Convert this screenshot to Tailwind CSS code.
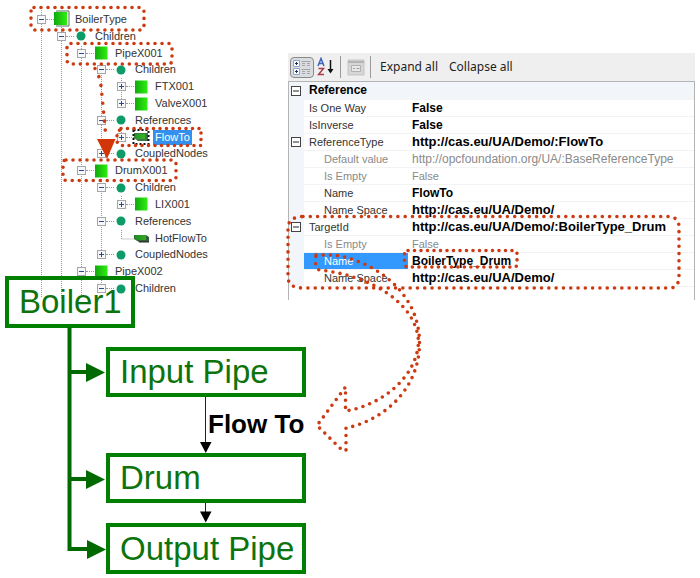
<!DOCTYPE html>
<html lang="en">
<head>
<meta charset="utf-8">
<title>Boiler type model</title>
<script src="https://cdn.jsdelivr.net/npm/@tailwindcss/browser@4"></script>
</head>
<body class="bg-white">
<main class="relative min-h-screen overflow-hidden font-['Liberation_Sans',Arial,sans-serif]">
  <div class="flex items-start pr-[5px]">
    <section class="relative w-[288px] shrink-0 pt-[11px]" aria-label="Type tree">
      <svg class="absolute left-0 top-0" width="240" height="300" fill="none" stroke="#999" stroke-dasharray="1 1" aria-hidden="true">
        <path d="M41.500 10V298M61.500 27V298M81.500 46V298M101.500 63V155M121.500 78V104M121.500 128V137M101.500 179V256M121.500 196V205M121.500 230V239H134M101.500 280V289"/>
      </svg>
      <ul id="tree" class="relative grid h-[286px] auto-rows-fr text-[11px] text-[#333]"></ul>
    </section>

    <section class="mt-[53px] min-w-0 flex-1" aria-label="Properties">
      <div class="flex h-7 items-center bg-[#efefef] pl-[2px] font-['Noto_Sans','Open_Sans',sans-serif] text-[12px] text-[#1e1e1e]">
        <button class="flex h-[21px] w-6 items-center justify-center rounded-sm border border-[#8a8a8a] bg-[#d9dde1]" aria-label="Categorized">
          <svg width="20" height="17" viewBox="0 0 20 17" fill="none">
            <path d="M1.500 1.500h6v6h-6zM1.500 9.500h6v6h-6z" fill="#fff" stroke="#8fa6c6"/>
            <path d="M3 4.500h3M4.500 3v3M3 12.500h3M4.500 11v3" stroke="#16315f"/>
            <path d="M9.500 2.500h9M10 4.500h3M15 4.500h3M10 6.500h3M15 6.500h3M9.500 10.500h9M10 12.500h3M15 12.500h3M10 14.500h3M15 14.500h3" stroke="#a6a6a6"/>
          </svg>
        </button>
        <button class="ml-[3px] h-5 w-[18px]" aria-label="Alphabetical">
          <svg width="18" height="20" viewBox="0 0 18 20" fill="none">
            <path d="M1 9L4 1.500L7 9M2 6.500h4" stroke="#3b66b8" stroke-width="1.500"/>
            <path d="M1.500 11.500h5L1.500 17.500h5.500" stroke="#a83c4c" stroke-width="1.500"/>
            <path d="M13.500 3v12" stroke="#111" stroke-width="1.500"/>
            <path d="M10.500 12l3 4.500l3-4.500z" fill="#111"/>
          </svg>
        </button>
        <span class="ml-[5px] h-[22px] w-px bg-[#9a9a9a]"></span>
        <button class="ml-[6px] h-[17px] w-[18px]" aria-label="Property pages" disabled>
          <svg width="18" height="17" viewBox="0 0 18 17" fill="none">
            <path d="M1 1h16v15H1z" fill="#d6d6d6" stroke="#c4c4c4"/>
            <path d="M1 3h16" stroke="#b4b4b4" stroke-width="2"/>
            <path d="M4.500 6.500h9v6h-9z" fill="#e8e8e8" stroke="#b0b0b0"/>
            <path d="M6 9.500h2M9.500 9.500h3" stroke="#a0a0a0"/>
          </svg>
        </button>
        <span class="ml-[5px] h-[22px] w-px bg-[#9a9a9a]"></span>
        <button class="ml-[9px] whitespace-nowrap">Expand all</button>
        <button class="ml-[11px] whitespace-nowrap">Collapse all</button>
      </div>
      <div class="h-[219px] border-x border-t border-[#b4b4b4]">
        <table class="w-full table-fixed border-collapse text-[11px]">
          <colgroup><col class="w-[15px]"><col class="w-[104px]"><col></colgroup>
          <tbody id="props"></tbody>
        </table>
      </div>
    </section>
  </div>

  <section aria-label="Boiler instance" class="text-[33px] text-[#0d740d]">
    <div class="absolute left-[5px] top-[276px] flex h-[52px] w-[130px] items-center whitespace-nowrap border-4 border-[#008000] pl-[10px]">Boiler1</div>
    <div class="absolute left-[106px] top-[347px] flex h-[50px] w-[200px] items-center whitespace-nowrap border-4 border-[#008000] pl-[10px]">Input Pipe</div>
    <div class="absolute left-[106px] top-[453px] flex h-[50px] w-[200px] items-center whitespace-nowrap border-4 border-[#008000] pl-[10px]">Drum</div>
    <div class="absolute left-[106px] top-[523px] flex h-[51px] w-[200px] items-center whitespace-nowrap border-4 border-[#008000] pl-[10px]">Output Pipe</div>
    <div class="absolute left-[208px] top-[410px] whitespace-nowrap text-[26px] leading-[28px] font-bold text-black">Flow To</div>
  </section>

  <svg class="pointer-events-none absolute left-0 top-0" width="700" height="578" viewBox="0 0 700 578" fill="none" aria-hidden="true">
    <path d="M69.500 327V549H90M69.500 372H90M69.500 479H90" stroke="#006a00" stroke-width="4"/>
    <path d="M86 363l19 9.500l-19 9.500zM86 470l19 9.500l-19 9.500zM87 540l19 9.500l-19 9.500z" fill="#006a00"/>
    <path d="M205.500 397V444M205.500 503V513" stroke="#222"/>
    <path d="M200 442h11.500l-5.750 11zM200 511.500h11.500l-5.750 11z" fill="#000"/>
    <g stroke="#cb3a10" stroke-width="3.600" stroke-linecap="round">
      <path d="M34 7.500H140Q144 8 144 12V26Q144 30 140 30H34Q31 29 31 25V12Q31 8 34 7.500Z" stroke-dasharray="0 7"/>
      <path d="M71 43.500H169Q172 44 172 47V60Q172 64 168 64H70Q67 63 67 60V47Q67 44 71 43.500Z" stroke-dasharray="0 7"/>
      <path d="M121 128.500H201V145.500H121L117 142V133Z" stroke-dasharray="0 6.500"/>
      <path d="M66 160H172Q176 160 176 164V177Q176 180.500 172 180.500H66Q63 180 63 177V164Q63 160 66 160Z" stroke-dasharray="0 7"/>
      <path d="M95 68.500Q100 77 101 86Q103 105 105.500 133" stroke-dasharray="0 9"/>
      <path d="M303 216.500H670Q679 218 679 227V278Q678 288 670 288H303Q288 288 288 277V227Q289 217 303 216.500Z" stroke-dasharray="0 7.300"/>
      <path d="M408 250.500H514Q517 250.500 517 254V264Q517 267 514 267H408Q404.500 267 404.500 263V254Q405 251 408 250.500Z" stroke-dasharray="0 6.500"/>
      <path d="M316 255H332C366 258 419 287 419.500 342C420 388 385 420 346 428V450L343 451L317 425.500L345.500 387V411C383 405 417 376 418.500 342C417 303 370 275 319 270L315.500 266Z" stroke-dasharray="0 7.200"/>
    </g>
    <path d="M97 139h18.500L107 159z" fill="#d23508"/>
  </svg>
</main>

<script>
const square = '<svg width="14" height="14" viewBox="0 0 14 14"><defs><linearGradient id="g"><stop offset="0" stop-color="#12a80e"/><stop offset="1" stop-color="#2df00f"/></linearGradient></defs><path d="M1 .500h12.500v13H1z" fill="url(#g)"/></svg>';
const icons = {
  square,
  type: '<svg class="overflow-visible" width="14" height="14" viewBox="0 0 14 14"><path d="M2 -1h13v15H2" fill="none" stroke="#55705a"/><path d="M0 0h13v13H0z" fill="url(#g)"/></svg>',
  dot: '<svg width="14" height="14" viewBox="0 0 14 14"><circle cx="7" cy="7" r="4.500" fill="#0d9c68"/></svg>',
  ref: '<svg class="overflow-visible" width="14" height="14" viewBox="0 0 14 14"><path d="M0 4h12l3 2v5H5L0 8z" fill="#355b3c"/><path d="M0 4h12v5H1z" fill="url(#g)" opacity=".55"/><path d="M5 11h10" stroke="#222"/></svg>',
  refSel: '<svg class="overflow-visible" width="14" height="14" viewBox="0 0 14 14"><path d="M0 3h14v8H4L0 8z" fill="#3c7a45"/><path d="M0 4h11v5H1z" fill="url(#g)" opacity=".5"/><path d="M-.500 0h15v14h-15z" fill="none" stroke="#111" stroke-width="2" stroke-dasharray="2 2"/></svg>'
};
const nodes = [
  [0,'-','type','BoilerType'],[1,'-','dot','Children'],[2,'-','square','PipeX001'],[3,'-','dot','Children'],
  [4,'+','square','FTX001'],[4,'+','square','ValveX001'],[3,'-','dot','References'],[4,'+','refSel','FlowTo'],
  [3,'+','dot','CoupledNodes'],[2,'-','square','DrumX001'],[3,'-','dot','Children'],[4,'+','square','LIX001'],
  [3,'-','dot','References'],[4,'','ref','HotFlowTo'],[3,'+','dot','CoupledNodes'],[2,'-','square','PipeX002'],[3,'-','dot','Children']
];
document.getElementById('tree').innerHTML = nodes.map(([level, sign, icon, name]) => `
  <li class="flex items-center whitespace-nowrap" style="padding-left:${37 + level * 20}px">
    ${sign ? `<button class="h-[9px] w-[9px] border border-[#a3a7ac] bg-[#f8f8f8]" aria-label="Toggle ${name}"><svg class="block" width="7" height="7" viewBox="0 0 7 7"><path d="${sign === '+' ? 'M1 3.500h5M3.500 1v5' : 'M1 3.500h5'}" stroke="#2b4c8c"/></svg></button>` : '<span class="w-[9px]"></span>'}
    <span class="w-2 ${sign ? 'border-t border-dotted border-[#999]' : ''}"></span>
    ${icons[icon]}
    <span class="${icon === 'refSel' ? 'ml-[5px] bg-[#3390ee] px-[2px] leading-[15px] text-white' : 'ml-[7px] leading-[15px]'}">${name}</span>
  </li>`).join('');

const rows = [
  ['head','Reference',''],['top','Is One Way','False'],['top','IsInverse','False'],
  ['group','ReferenceType','http://cas.eu/UA/Demo/:FlowTo'],
  ['gray','Default value','http://opcfoundation.org/UA/:BaseReferenceType'],['gray','Is Empty','False'],
  ['sub','Name','FlowTo'],['sub','Name Space','http://cas.eu/UA/Demo/'],
  ['group','TargetId','http://cas.eu/UA/Demo/:BoilerType_Drum'],['gray','Is Empty','False'],
  ['sel','Name','BoilerType_Drum'],['sub','Name Space','http://cas.eu/UA/Demo/']
];
const nameClass = {
  head: 'pl-[5px] bg-[#f2f6fb] font-bold text-[12px] text-black', top: 'pl-[5px] font-normal text-[#333]', group: 'pl-[5px] font-normal text-[#333]',
  gray: 'pl-5 font-normal text-[#8a8a8a]', sub: 'pl-5 font-normal text-[#333]', sel: 'pl-5 font-normal bg-[#3399ff] text-white'
};
const valueClass = (kind, value) => {
  const url = value.startsWith('http');
  if (kind === 'head') return 'bg-[#f2f6fb]';
  if (kind === 'gray') return url ? 'text-[12px] text-[#8a8a8a]' : 'text-[11px] text-[#8a8a8a]';
  return url ? 'text-[13px] font-bold text-black' : 'text-[12px] font-bold text-black';
};
document.getElementById('props').innerHTML = rows.map(([kind, name, value]) => `
  <tr class="h-[17px] leading-[16px] whitespace-nowrap">
    <td class="bg-[#f2f6fb] p-0 pl-[2px]">${kind === 'head' || kind === 'group' ? `<button class="block h-[10px] w-[10px] border border-[#444] bg-white" aria-label="Toggle ${name}"><svg class="block" width="8" height="8"><path d="M1 4h6" stroke="#222"/></svg></button>` : ''}</td>
    <th scope="row" class="border-b border-[#f3f3f3] p-0 text-left ${nameClass[kind]}">${name}</th>
    <td class="border-b border-[#f3f3f3] p-0 pl-1 ${valueClass(kind, value)}">${value}</td>
  </tr>`).join('');
</script>
</body>
</html>
